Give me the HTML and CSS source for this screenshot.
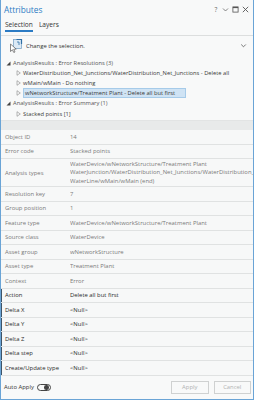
FILE: index.html
```html
<!DOCTYPE html>
<html>
<head>
<meta charset="utf-8">
<link rel="stylesheet" href="styles.css">
</head>
<body>
<div class="win">
  <header class="titlebar">
    <span class="title">Attributes</span>
    <div class="ctrls">
      <span class="help">?</span>
      <svg class="ic" width="7" height="7" viewBox="0 0 7 7"><path d="M1 2.5 L3.5 5 L6 2.5" fill="none" stroke="#666" stroke-width="0.8"/></svg>
      <svg class="ic" width="7" height="7" viewBox="0 0 7 7"><rect x="0.9" y="0.9" width="5.2" height="5.2" fill="none" stroke="#555" stroke-width="0.8"/><rect x="0.9" y="0.9" width="5.2" height="1.2" fill="#555"/></svg>
      <svg class="ic" width="7" height="7" viewBox="0 0 7 7"><path d="M0.8 0.8 L6.2 6.2 M6.2 0.8 L0.8 6.2" stroke="#555" stroke-width="0.9"/></svg>
    </div>
  </header>
  <nav class="tabs">
    <span class="tab active">Selection</span>
    <span class="tab">Layers</span>
  </nav>
  <section class="selpanel">
    <div class="changesel">
      <svg class="selicon" width="14" height="15" viewBox="0 0 14 15">
        <rect x="4.5" y="1.5" width="8" height="9" fill="#dbe9f5" stroke="#7fa6c8" stroke-width="0.8"/>
        <path d="M7.5 1.5 H12.5 V6" fill="none" stroke="#2f6fa6" stroke-width="1.2"/>
        <path d="M8 4 L10 4 L10 7" fill="none" stroke="#2f6fa6" stroke-width="0.8"/>
        <path d="M1.5 6 L1.5 13.5 L3.4 11.8 L4.8 14.5 L6 13.9 L4.7 11.3 L7.2 11.1 Z" fill="#fff" stroke="#555" stroke-width="0.7" stroke-linejoin="round"/>
      </svg>
      <span class="cstext">Change the selection.</span>
      <svg class="chev" width="7" height="7" viewBox="0 0 7 7"><path d="M1.2 2.5 L3.5 4.8 L5.8 2.5" fill="none" stroke="#555" stroke-width="0.8"/></svg>
    </div>
    <ul class="tree">
      <li class="node lvl1"><svg class="exp" width="5" height="5" viewBox="0 0 5 5"><path d="M4.5 0.5 L4.5 4.5 L0.5 4.5 Z" fill="#444"/></svg><span>AnalysisResults : Error Resolutions (3)</span></li>
      <li class="node lvl2"><svg class="exp" width="5" height="6" viewBox="0 0 5 6"><path d="M1 0.7 L4.3 3 L1 5.3 Z" fill="none" stroke="#888" stroke-width="0.6"/></svg><span>WaterDistribution_Net_Junctions/WaterDistribution_Net_Junctions - Delete all</span></li>
      <li class="node lvl2"><svg class="exp" width="5" height="6" viewBox="0 0 5 6"><path d="M1 0.7 L4.3 3 L1 5.3 Z" fill="none" stroke="#888" stroke-width="0.6"/></svg><span>wMain/wMain - Do nothing</span></li>
      <li class="node lvl2"><svg class="exp" width="5" height="6" viewBox="0 0 5 6"><path d="M1 0.7 L4.3 3 L1 5.3 Z" fill="none" stroke="#888" stroke-width="0.6"/></svg><span class="sel">wNetworkStructure/Treatment Plant - Delete all but first</span></li>
      <li class="node lvl1"><svg class="exp" width="5" height="5" viewBox="0 0 5 5"><path d="M4.5 0.5 L4.5 4.5 L0.5 4.5 Z" fill="#444"/></svg><span>AnalysisResults : Error Summary (1)</span></li>
      <li class="node lvl2"><svg class="exp" width="5" height="6" viewBox="0 0 5 6"><path d="M1 0.7 L4.3 3 L1 5.3 Z" fill="none" stroke="#888" stroke-width="0.6"/></svg><span>Stacked points [1]</span></li>
    </ul>
  </section>
  <div class="band"></div>
  <div class="grid">
    <div class="row ro"><span class="k">Object ID</span><span class="v">14</span></div>
    <div class="row ro"><span class="k">Error code</span><span class="v">Stacked points</span></div>
    <div class="row ro tall"><span class="k">Analysis types</span><span class="v multi"><span>WaterDevice/wNetworkStructure/Treatment Plant</span><span>WaterJunction/WaterDistribution_Net_Junctions/WaterDistribution_Net_Junctions</span><span>WaterLine/wMain/wMain (end)</span></span></div>
    <div class="row ro"><span class="k">Resolution key</span><span class="v">7</span></div>
    <div class="row ro"><span class="k">Group position</span><span class="v">1</span></div>
    <div class="row ro"><span class="k">Feature type</span><span class="v">WaterDevice/wNetworkStructure/Treatment Plant</span></div>
    <div class="row ro"><span class="k">Source class</span><span class="v">WaterDevice</span></div>
    <div class="row ro"><span class="k">Asset group</span><span class="v">wNetworkStructure</span></div>
    <div class="row ro"><span class="k">Asset type</span><span class="v">Treatment Plant</span></div>
    <div class="row ro"><span class="k">Context</span><span class="v">Error</span></div>
    <div class="row ed"><span class="k">Action</span><span class="v">Delete all but first</span></div>
    <div class="row ed"><span class="k">Delta X</span><span class="v">&lt;Null&gt;</span></div>
    <div class="row ed"><span class="k">Delta Y</span><span class="v">&lt;Null&gt;</span></div>
    <div class="row ed"><span class="k">Delta Z</span><span class="v">&lt;Null&gt;</span></div>
    <div class="row ed"><span class="k">Delta step</span><span class="v">&lt;Null&gt;</span></div>
    <div class="row ed"><span class="k">Create/Update type</span><span class="v">&lt;Null&gt;</span></div>
  </div>
  <footer class="foot">
    <span class="auto">Auto Apply</span>
    <span class="toggle"><span class="knob"></span></span>
    <span class="spacer"></span>
    <span class="btn">Apply</span>
    <span class="btn">Cancel</span>
  </footer>
</div>
</body>
</html>
```

FILE: styles.css
```css
* { box-sizing: border-box; }
html, body { margin: 0; padding: 0; background: #f8f9f9; }
body { font-family: "Open Sans", "Noto Sans", sans-serif; font-size: 5.9px; color: #333; }

.win {
  width: 254px;
  height: 400px;
  display: flex;
  flex-direction: column;
  background: #f8f9f9;
  border-left: 1px solid #6aa4d6;
  border-right: 1px solid #6aa4d6;
  border-bottom: 1px solid #6aa4d6;
  overflow: hidden;
}

.titlebar {
  height: 18px;
  display: flex;
  align-items: center;
  padding: 0 4px 0 3px;
  flex: none;
}
.title { color: #2b7bc4; font-size: 8.3px; flex: 1; }
.ctrls { display: flex; align-items: center; gap: 3px; color: #555; }
.help { font-size: 6.5px; color: #666; width: 6px; text-align: center; }
.ic { display: block; }

.tabs {
  height: 17px;
  display: flex;
  align-items: flex-start;
  gap: 6px;
  padding: 2px 0 0 4px;
  flex: none;
}
.tab { font-size: 6.6px; color: #333; line-height: 9px; padding-bottom: 1px; }
.tab.active { border-bottom: 2px solid #2b7bc4; }

.selpanel {
  height: 86px;
  border-top: 1px solid #dcdede;
  border-bottom: 1px solid #e2e4e4;
  flex: none;
}
.changesel {
  height: 19px;
  display: flex;
  align-items: center;
  padding: 0 6px 0 8px;
}
.selicon { display: block; margin-right: 3px; }
.cstext { flex: 1; font-size: 5.9px; color: #333; }
.chev { display: block; }

.tree { list-style: none; margin: 3px 0 0 0; padding: 0; font-size: 5.75px; }
.node { height: 10.1px; display: flex; align-items: center; white-space: nowrap; color: #3a3a3a; }
.node .exp { display: block; flex: none; margin-right: 2px; }
.lvl1 { padding-left: 5px; color: #555; }
.lvl2 { padding-left: 15px; }
.node .sel {
  background: #cfe3f4;
  border: 1px solid #a6cbe9;
  padding: 0 1px 0 1px;
  width: 163px;
  height: 10px;
  line-height: 8px;
}

.band { height: 9px; background: #e8eaea; flex: none; }

.grid { display: flex; flex-direction: column; flex: none; }
.row {
  height: 14.5px;
  display: grid;
  grid-template-columns: 69px 1fr;
  align-items: center;
  border-bottom: 1px solid #e0e2e2;
  background: #f7f8f8;
  white-space: nowrap;
  overflow: hidden;
}
.row.tall { height: 28px; }
.k { padding-left: 4px; }
.v { overflow: hidden; }
.ro .k, .ro .v { color: #7a7a7a; }
.ed { box-shadow: inset 1px 0 0 #3e5468; }
.ed .k, .ed .v { color: #2a2a2a; }
.multi { display: flex; flex-direction: column; line-height: 8.5px; }

.foot {
  flex: 1;
  display: flex;
  align-items: center;
  padding: 0 2px 0 3px;
}
.auto { color: #333; margin-right: 3px; }
.toggle {
  width: 14px;
  height: 7px;
  border: 0.8px solid #444;
  border-radius: 4px;
  display: flex;
  align-items: center;
  justify-content: flex-end;
  padding: 0 1px;
}
.knob { width: 4.6px; height: 4.6px; border-radius: 50%; background: #444; }
.spacer { flex: 1; }
.btn {
  width: 37.5px;
  height: 13px;
  border: 1px solid #cfd1d1;
  background: #f8f9f9;
  color: #b0b2b2;
  display: flex;
  align-items: center;
  justify-content: center;
  margin-left: 5px;
}
```
